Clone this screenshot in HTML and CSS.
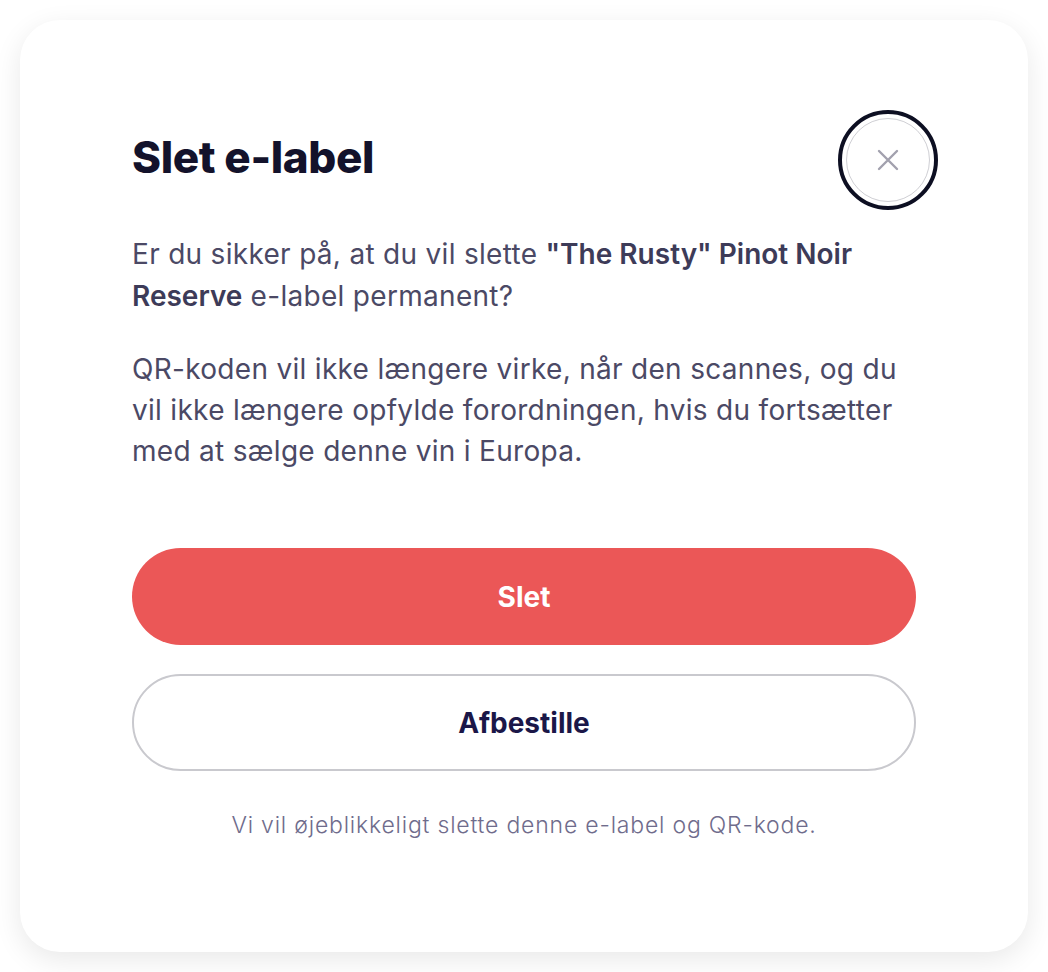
FILE: index.html
```html
<!DOCTYPE html>
<html lang="da">
<head>
    <meta charset="UTF-8">
    <meta name="viewport" content="width=device-width, initial-scale=1.0">
    <title>Slet e-label</title>
    <link rel="stylesheet" href="styles.css">
</head>
<body>
    <div class="modal">
        <button type="button" class="close-btn" aria-label="Luk">
            <svg width="24" height="24" viewBox="0 0 24 24" fill="none" stroke="currentColor" stroke-width="2.4" stroke-linecap="round">
                <path d="M3 3 L21 21 M21 3 L3 21"/>
            </svg>
        </button>
        <h1>Slet e-label</h1>
        <p class="text">Er du sikker på, at du vil slette <strong>"The Rusty" Pinot Noir Reserve</strong> e-label permanent?</p>
        <p class="text second">QR-koden vil ikke længere virke, når den scannes, og du vil ikke længere opfylde forordningen, hvis du fortsætter med at sælge denne vin i Europa.</p>
        <div class="actions">
            <button type="button" class="btn btn-danger">Slet</button>
            <button type="button" class="btn btn-outline">Afbestille</button>
        </div>
        <p class="note">Vi vil øjeblikkeligt slette denne e-label og QR-kode.</p>
    </div>
</body>
</html>
```

FILE: styles.css
```css
body {
    font-family: Inter, "Noto Sans", sans-serif;
    margin: 0;
    padding: 20px;
    background-color: #ffffff;
}
.modal {
    position: relative;
    width: 1008px;
    height: 932px;
    box-sizing: border-box;
    padding: 112px;
    background: white;
    border-radius: 40px;
    box-shadow: 0 8px 28px rgba(0, 0, 0, 0.09);
}
.close-btn {
    position: absolute;
    top: 98px;
    right: 98px;
    width: 84px;
    height: 84px;
    padding: 0;
    border: 1px solid #cfcfd4;
    border-radius: 50%;
    background: white;
    color: #a2a1ae;
    outline: 4px solid #0d0f22;
    outline-offset: 4px;
    display: flex;
    align-items: center;
    justify-content: center;
    cursor: pointer;
}
h1 {
    margin: 0;
    font-size: 44px;
    line-height: 50px;
    font-weight: 800;
    color: #13122b;
    letter-spacing: -0.4px;
}
.text {
    margin: 51px 0 0;
    font-size: 28px;
    line-height: 42px;
    letter-spacing: 0.3px;
    color: #4b4965;
}
.text strong {
    font-weight: 600;
    color: #3d3b58;
    letter-spacing: 0;
}
.text.second {
    margin-top: 32px;
    line-height: 41px;
}
.actions {
    margin-top: 76px;
    display: flex;
    flex-direction: column;
    gap: 29px;
}
.btn {
    height: 97px;
    width: 100%;
    border-radius: 49px;
    font-family: inherit;
    font-size: 28px;
    font-weight: 700;
    cursor: pointer;
}
.btn-danger {
    background-color: #eb5757;
    color: white;
    border: none;
}
.btn-outline {
    background: white;
    color: #1b1748;
    border: 2px solid #c9c9ce;
}
.note {
    margin: 40px 0 0;
    text-align: center;
    font-size: 23px;
    font-weight: 300;
    line-height: 28px;
    letter-spacing: 0.8px;
    color: #6f6c8c;
}
```
